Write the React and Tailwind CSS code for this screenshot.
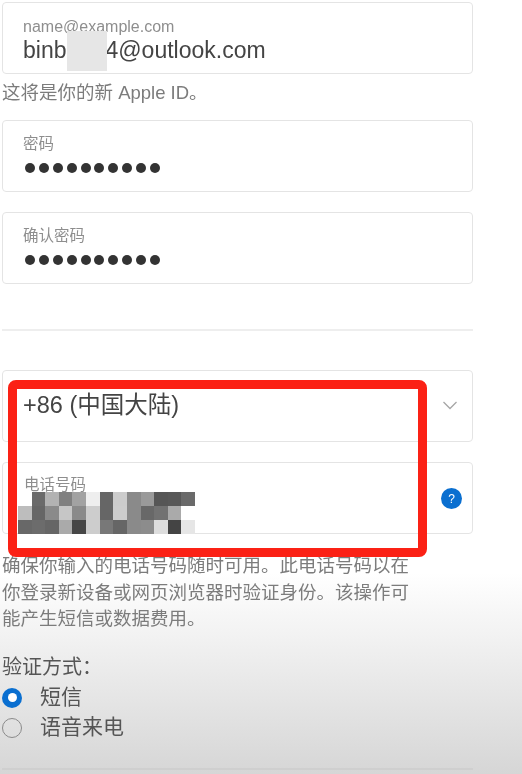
const FONT = 'font-["Liberation_Sans","Noto_Sans_CJK_SC",sans-serif]';

const MOSAIC = [
  ['#ffffff', '#6a6a6a', '#b2b2b2', '#808080', '#a2a2a2', '#eeeeee', '#666666', '#cccccc', '#8a8a8a', '#9a9a9a', '#565656', '#585858', '#6a6a6a'],
  ['#bdbdbd', '#666666', '#8a8a8a', '#c6c6c6', '#8a8a8a', '#cdcdcd', '#666666', '#cdcdcd', '#8a8a8a', '#686868', '#727272', '#aaaaaa', '#ffffff'],
  ['#686868', '#6c6c6c', '#666666', '#aaaaaa', '#464646', '#cdcdcd', '#787878', '#666666', '#8a8a8a', '#8c8c8c', '#dddddd', '#444444', '#e6e6e6'],
];

const Field = ({ children, className = '' }) => (
  <div className={`h-[72px] w-[471px] rounded border border-[#e4e4e4] bg-white pl-[20px] ${className}`}>
    {children}
  </div>
);

const Dots = () => (
  <div className="mt-[10px] flex gap-[3.9px] pl-[2px]">
    {Array.from({ length: 10 }).map((_, i) => (
      <span key={i} className="size-[10px] rounded-full bg-[#333333]" />
    ))}
  </div>
);

export default function App() {
  return (
    <div className={`relative h-[774px] w-[522px] overflow-hidden bg-linear-to-b from-white from-[74%] to-[#d6d6d6] pl-[2px] pt-[2px] ${FONT}`}>
      <div className="blur-[0.5px]">
        <Field>
          <div className="pt-[16px] text-[16px] leading-[16px] text-[#8e8e8e]">name@example.com</div>
          <div className="text-[23px] leading-[30px] text-[#444444]">
            binb
            <span className="relative inline-block w-[39px]">
              <span className="absolute -top-[27px] left-[1px] h-[40px] w-[40px] bg-[#e6e6e6]" />
            </span>
            <span>4@outlook.com</span>
          </div>
        </Field>

        <p className="mt-[8px] text-[18.5px] leading-[22px] text-[#7c7c7c]">这将是你的新 Apple ID。</p>

        <Field className="mt-[16px]">
          <div className="pt-[14px] text-[15.5px] leading-[18px] text-[#8e8e8e]">密码</div>
          <Dots />
        </Field>

        <Field className="mt-[20px]">
          <div className="pt-[14px] text-[15.5px] leading-[18px] text-[#8e8e8e]">确认密码</div>
          <Dots />
        </Field>

        <div className="mt-[45px] h-[2px] w-[471px] bg-[#eeeeee]" />

        <Field className="mt-[39px] flex items-center justify-between pr-[13px]">
          <div className="-mt-[3px] text-[23.5px] leading-[30px] text-[#444444]">+86 (中国大陆)</div>
          <svg className="-mt-[2px]" width="18" height="18" viewBox="0 0 18 18" fill="none" stroke="#a6a6a6" strokeWidth="1.3">
            <path d="M2.5 6 L9 12.5 L15.5 6" />
          </svg>
        </Field>

        <Field className="mt-[20px] flex justify-between pr-[10px]">
          <div className="-ml-[5px]">
            <div className="pl-[6px] pt-[14px] text-[15.5px] leading-[15px] text-[#8e8e8e]">电话号码</div>
            <div className="grid w-[177px] grid-cols-13">
              {MOSAIC.flat().map((color, i) => (
                <span key={i} className="h-[14px]" style={{ backgroundColor: color }} />
              ))}
            </div>
          </div>
          <div className="mt-[25px] flex size-[21px] items-center justify-center rounded-full bg-[#0a6fd0] text-[12px] text-white">?</div>
        </Field>

        <p className="mt-[19px] w-[415px] text-[18.5px] leading-[26.5px] text-[#7c7c7c]">
          确保你输入的电话号码随时可用。此电话号码以在你登录新设备或网页浏览器时验证身份。该操作可能产生短信或数据费用。
        </p>

        <div className="mt-[19px] text-[20px] leading-[30px] text-[#555555]">验证方式：</div>

        <div className="flex h-[30px] items-center gap-[18px]">
          <span className="mt-[2px] flex size-[20px] items-center justify-center rounded-full bg-[#0a6fd0]">
            <span className="size-[9px] rounded-full bg-white" />
          </span>
          <span className="text-[21px] text-[#555555]">短信</span>
        </div>
        <div className="flex h-[30px] items-center gap-[18px]">
          <span className="mt-[2px] size-[20px] rounded-full border-[1.5px] border-[#8a8a8a]" />
          <span className="text-[21px] text-[#555555]">语音来电</span>
        </div>

        <div className="mt-[26px] h-[2px] w-[471px] bg-[#cfcfcf]" />
      </div>

      {/* red annotation drawn over the phone fields */}
      <div className="absolute left-[8px] top-[380px] h-[177px] w-[419px] rounded-lg border-[9px] border-[#fb2115]" />
    </div>
  );
}
